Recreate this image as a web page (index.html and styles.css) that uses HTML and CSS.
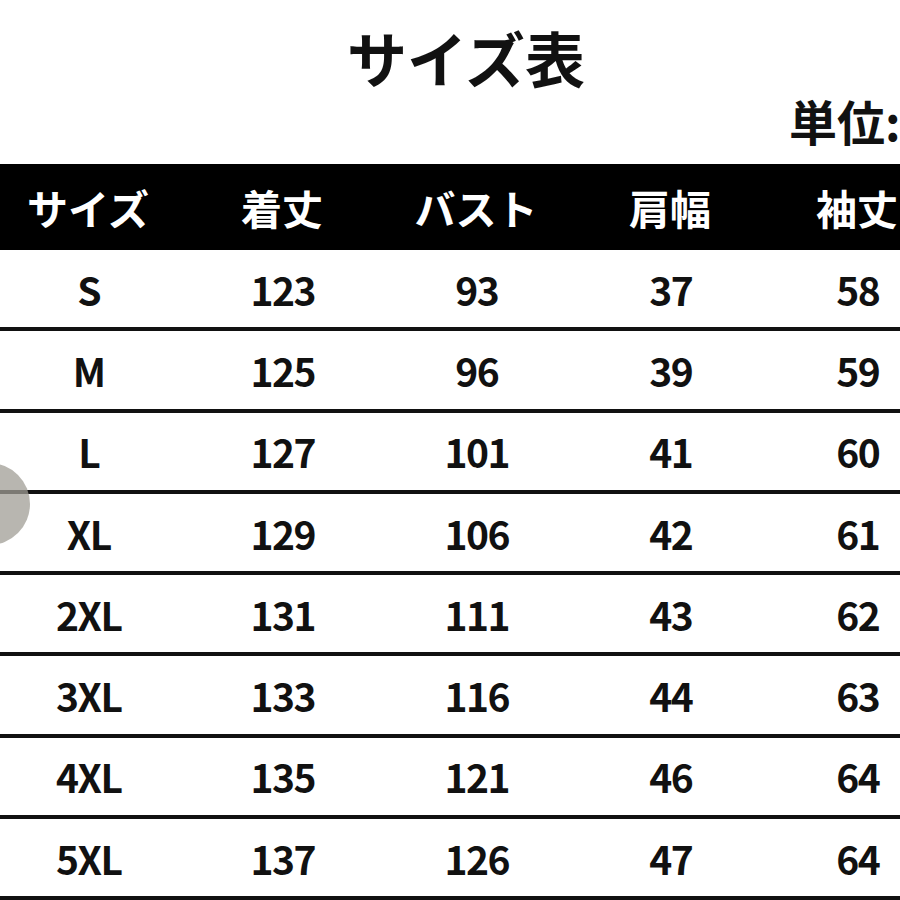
FILE: index.html
```html
<!DOCTYPE html>
<html lang="ja">
<head>
<meta charset="utf-8">
<title>サイズ表</title>
<link rel="stylesheet" href="styles.css">
</head>
<body>
<div class="page">
  <h1 class="title">サイズ表</h1>
  <div class="unit">単位:cm</div>
  <div class="table">
    <div class="row head">
      <div class="c">サイズ</div><div class="c">着丈</div><div class="c">バスト</div><div class="c">肩幅</div><div class="c">袖丈</div>
    </div>
    <div class="row"><div class="c">S</div><div class="c">123</div><div class="c">93</div><div class="c">37</div><div class="c">58</div></div>
    <div class="row"><div class="c">M</div><div class="c">125</div><div class="c">96</div><div class="c">39</div><div class="c">59</div></div>
    <div class="row"><div class="c">L</div><div class="c">127</div><div class="c">101</div><div class="c">41</div><div class="c">60</div></div>
    <div class="row"><div class="c">XL</div><div class="c">129</div><div class="c">106</div><div class="c">42</div><div class="c">61</div></div>
    <div class="row"><div class="c">2XL</div><div class="c">131</div><div class="c">111</div><div class="c">43</div><div class="c">62</div></div>
    <div class="row"><div class="c">3XL</div><div class="c">133</div><div class="c">116</div><div class="c">44</div><div class="c">63</div></div>
    <div class="row"><div class="c">4XL</div><div class="c">135</div><div class="c">121</div><div class="c">46</div><div class="c">64</div></div>
    <div class="row"><div class="c">5XL</div><div class="c">137</div><div class="c">126</div><div class="c">47</div><div class="c">64</div></div>
  </div>
  <div class="handle"></div>
</div>
</body>
</html>
```
FILE: styles.css
```css
html, body {
  margin: 0;
  padding: 0;
  background: #fff;
}
body {
  width: 900px;
  height: 900px;
  overflow: hidden;
}
.page {
  position: relative;
  width: 900px;
  height: 900px;
  overflow: hidden;
  color: #111;
  font-family: "Noto Sans CJK JP", "Liberation Sans", sans-serif;
}
.title {
  margin: 22px 0 0 0;
  padding-left: 32px;
  height: 70px;
  line-height: 70px;
  text-align: center;
  font-size: 60px;
  font-weight: 700;
}
.unit {
  margin-top: 4px;
  padding-left: 789px;
  height: 48px;
  line-height: 48px;
  font-size: 48px;
  font-weight: 700;
  white-space: nowrap;
}
.table {
  margin-top: 20px;
  width: 938px;
}
.row {
  display: grid;
  grid-template-columns: 176px 212px 176px 212px 162px;
  height: 81.3px;
  box-sizing: border-box;
  border-bottom: 4px solid #111;
  align-items: center;
  font-family: "Noto Sans CJK JP", "Liberation Sans", sans-serif;
  font-weight: 700;
  font-size: 39px;
  letter-spacing: -1.5px;
}
.row .c {
  text-align: center;
  padding-left: 1.5px;
  white-space: nowrap;
}
.row.head {
  height: 86px;
  background: #000;
  color: #fff;
  border-bottom: none;
  font-weight: 700;
  font-size: 41px;
  letter-spacing: 0;
}
.row.head .c {
  padding-left: 0;
}
.handle {
  position: absolute;
  left: -52px;
  top: 463px;
  width: 82px;
  height: 82px;
  border-radius: 50%;
  background: rgba(160, 157, 150, 0.75);
}
```
